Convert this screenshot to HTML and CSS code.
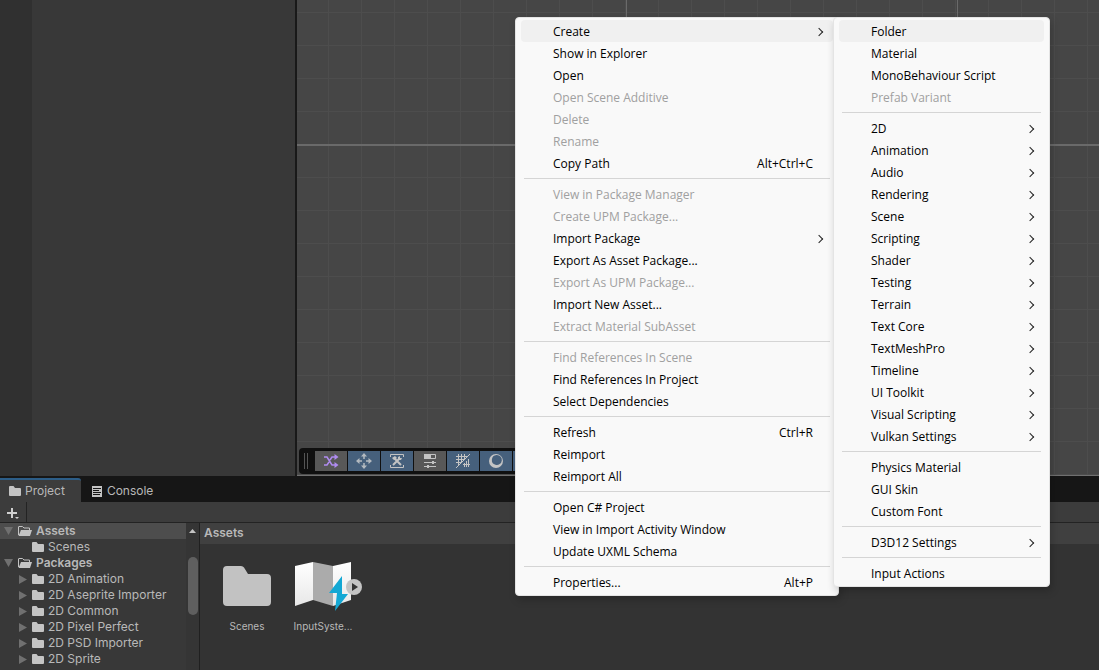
FILE: index.html
```html
<!DOCTYPE html>
<html lang="en">
<head>
<meta charset="utf-8">
<title>Project</title>
<link rel="stylesheet" href="styles.css">
</head>
<body>
<svg class="defs" aria-hidden="true">
  <symbol id="folder" viewBox="0 0 12 10"><path d="M0 1q0-1 1-1h3.500l1.500 2h5q1 0 1 1v6q0 1-1 1H1q-1 0-1-1z" fill="#c4c4c4"/></symbol>
  <symbol id="folder-open" viewBox="0 0 14 10"><path d="M.5 9V1Q.5.5 1 .5h3.500L6 2h5.500v2" fill="none" stroke="#c4c4c4"/><path d="M.5 10 3 4h11l-2 6z" fill="#c4c4c4"/></symbol>
</svg>

<main class="editor">
  <div class="hierarchy"><div class="gutter"></div></div>
  <section class="scene">
    <div class="tools" role="toolbar" aria-label="Scene tools">
      <span class="grip"></span>
      <button class="tool off" aria-label="Shuffle"><svg width="16" height="14" viewBox="0 0 16 14"><path d="M1 3h3l5 8h4M1 11h3l2-3M7 6l2-3h4" fill="none" stroke="#b08cf0" stroke-width="1.500"/><path d="M11.500 0v6l4-3zM11.500 8v6l4-3z" fill="#b08cf0"/></svg></button>
      <button class="tool" aria-label="Move"><svg width="16" height="16" viewBox="0 0 16 16"><path d="M8 2v4M8 10v4M2 8h4M10 8h4" fill="none" stroke="#b4bac0" stroke-width="1.500"/><path d="M8 0l3 3.500H5zM8 16l3-3.500H5zM0 8l3.500-3v6zM16 8l-3.500-3v6z" fill="#b4bac0"/></svg></button>
      <button class="tool" aria-label="Tools"><svg width="16" height="16" viewBox="0 0 16 16"><path d="M1.500 4V1.500h13V4M1.500 12v2.500h13V12" fill="none" stroke="#c4c4c4"/><path d="m5 5 7 7M10.500 5.500 4 12" fill="none" stroke="#c4c4c4" stroke-width="2"/><path d="M3 5l3-2 2 2-3 2zM9 4l2-1v2l2 0-1 2-3 0z" fill="#c4c4c4"/></svg></button>
      <button class="tool off" aria-label="Overlays"><svg width="14" height="14" viewBox="0 0 14 14"><path d="M1.500 .5h11v4h-11z" fill="none" stroke="#c4c4c4"/><path d="M1 0h7v5H1z" fill="#c4c4c4"/><path d="M1 8.500h12M1 12.500h12" stroke="#c4c4c4"/><path d="M9 7h2v3H9zM4 11h2v3H4z" fill="#c4c4c4"/></svg></button>
      <button class="tool" aria-label="Grid snapping"><svg width="16" height="16" viewBox="0 0 16 16"><path d="M1 3.500h11M1 6.500h8M1 9.500h5M3.500 1v11M6.500 1v8M9.500 1v5M8 11.500h7M9.500 10v4M11.500 8v6M13.500 6v8M1 15 15 1" fill="none" stroke="#c4c4c4"/></svg></button>
      <button class="tool" aria-label="Draw mode"><svg width="16" height="16" viewBox="0 0 16 16"><path d="M8 1a7 7 0 1 0 0 14A7 7 0 0 0 8 1zM8.500 2a5 5 0 1 1-1 9.800A5 5 0 0 1 8.500 2z" fill="#c4c4c4" fill-rule="evenodd"/></svg></button>
      <button class="tool" aria-label="View options"></button>
    </div>
  </section>
</main>

<section class="dock">
  <div class="tabs" role="tablist">
    <button class="tab active" role="tab" aria-selected="true"><svg width="12" height="10"><use href="#folder"/></svg>Project</button>
    <button class="tab" role="tab" aria-selected="false"><svg width="10" height="11" viewBox="0 0 10 11"><path d="M0 0h10v11H0z" fill="#c4c4c4"/><path d="M1 2.500h8M1 4.500h6M1 6.500h8M1 8.500h7" stroke="#161616"/></svg>Console</button>
  </div>
  <div class="bar">
    <button class="add" aria-label="Add"><svg width="12" height="11" viewBox="0 0 12 11"><path d="M5 0v10M0 5h10" stroke="#d0d0d0" stroke-width="2"/><path d="M8 9h4l-2 2z" fill="#d0d0d0"/></svg></button>
  </div>
  <div class="browser">
    <ul class="tree">
      <li class="node selected"><svg class="arrow" width="9" height="8" viewBox="0 0 9 8"><path d="M0 0h9L4.500 8z"/></svg><svg width="14" height="10"><use href="#folder-open"/></svg><b>Assets</b></li>
      <li class="node deep"><span class="arrow blank"></span><svg width="12" height="10"><use href="#folder"/></svg>Scenes</li>
      <li class="node"><svg class="arrow" width="9" height="8" viewBox="0 0 9 8"><path d="M0 0h9L4.500 8z"/></svg><svg width="14" height="10"><use href="#folder-open"/></svg><b>Packages</b></li>
      <li class="node deep"><svg class="arrow" width="8" height="9" viewBox="0 0 8 9"><path d="M0 0v9l8-4.500z"/></svg><svg width="12" height="10"><use href="#folder"/></svg>2D Animation</li>
      <li class="node deep"><svg class="arrow" width="8" height="9" viewBox="0 0 8 9"><path d="M0 0v9l8-4.500z"/></svg><svg width="12" height="10"><use href="#folder"/></svg>2D Aseprite Importer</li>
      <li class="node deep"><svg class="arrow" width="8" height="9" viewBox="0 0 8 9"><path d="M0 0v9l8-4.500z"/></svg><svg width="12" height="10"><use href="#folder"/></svg>2D Common</li>
      <li class="node deep"><svg class="arrow" width="8" height="9" viewBox="0 0 8 9"><path d="M0 0v9l8-4.500z"/></svg><svg width="12" height="10"><use href="#folder"/></svg>2D Pixel Perfect</li>
      <li class="node deep"><svg class="arrow" width="8" height="9" viewBox="0 0 8 9"><path d="M0 0v9l8-4.500z"/></svg><svg width="12" height="10"><use href="#folder"/></svg>2D PSD Importer</li>
      <li class="node deep"><svg class="arrow" width="8" height="9" viewBox="0 0 8 9"><path d="M0 0v9l8-4.500z"/></svg><svg width="12" height="10"><use href="#folder"/></svg>2D Sprite</li>
    </ul>
    <div class="scroll"><svg width="7" height="4" viewBox="0 0 7 4"><path d="M0 4h7L3.500 0z" fill="#c4c4c4"/></svg><span class="thumb"></span></div>
    <div class="content">
      <h2 class="crumb">Assets</h2>
      <div class="assets">
        <figure class="asset"><svg width="74" height="56" viewBox="0 0 74 56"><path d="M13 12q0-4 4-4h14q2 0 3 1.500l4 6.500h19q4 0 4 4v24q0 4-4 4H17q-4 0-4-4z" fill="#c2c2c2"/></svg><figcaption>Scenes</figcaption></figure>
        <figure class="asset"><svg class="preview" width="74" height="56" viewBox="0 0 74 56"><defs><linearGradient id="paper" x2="0" y2="1"><stop stop-color="#fff"/><stop offset="1" stop-color="#e8e8e8"/></linearGradient></defs><path d="M9 8l18-4v38L9 48z" fill="url(#paper)"/><path d="M27 4l20 4v40l-20-6z" fill="#ababab"/><path d="M47 8l18-4v38l-18 6z" fill="url(#paper)"/><path d="M56 18 43 35h8l-2 18 13-17h-6z" fill="#14a8d4"/><circle cx="68" cy="29" r="8" fill="#c4c4c4"/><path d="M66 25v8l6-4z" fill="#333"/></svg><figcaption>InputSyste...</figcaption></figure>
      </div>
    </div>
  </div>
</section>

<div class="menu context" role="menu">
  <button class="item open" role="menuitem">Create<i class="more"></i></button>
  <button class="item" role="menuitem">Show in Explorer</button>
  <button class="item" role="menuitem">Open</button>
  <button class="item" role="menuitem" disabled>Open Scene Additive</button>
  <button class="item" role="menuitem" disabled>Delete</button>
  <button class="item" role="menuitem" disabled>Rename</button>
  <button class="item" role="menuitem">Copy Path<kbd>Alt+Ctrl+C</kbd></button>
  <hr>
  <button class="item" role="menuitem" disabled>View in Package Manager</button>
  <button class="item" role="menuitem" disabled>Create UPM Package...</button>
  <button class="item" role="menuitem">Import Package<i class="more"></i></button>
  <button class="item" role="menuitem">Export As Asset Package...</button>
  <button class="item" role="menuitem" disabled>Export As UPM Package...</button>
  <button class="item" role="menuitem">Import New Asset...</button>
  <button class="item" role="menuitem" disabled>Extract Material SubAsset</button>
  <hr>
  <button class="item" role="menuitem" disabled>Find References In Scene</button>
  <button class="item" role="menuitem">Find References In Project</button>
  <button class="item" role="menuitem">Select Dependencies</button>
  <hr>
  <button class="item" role="menuitem">Refresh<kbd>Ctrl+R</kbd></button>
  <button class="item" role="menuitem">Reimport</button>
  <button class="item" role="menuitem">Reimport All</button>
  <hr>
  <button class="item" role="menuitem">Open C# Project</button>
  <button class="item" role="menuitem">View in Import Activity Window</button>
  <button class="item" role="menuitem">Update UXML Schema</button>
  <hr>
  <button class="item" role="menuitem">Properties...<kbd>Alt+P</kbd></button>
</div>

<div class="menu submenu" role="menu">
  <button class="item open" role="menuitem">Folder</button>
  <button class="item" role="menuitem">Material</button>
  <button class="item" role="menuitem">MonoBehaviour Script</button>
  <button class="item" role="menuitem" disabled>Prefab Variant</button>
  <hr>
  <button class="item" role="menuitem">2D<i class="more"></i></button>
  <button class="item" role="menuitem">Animation<i class="more"></i></button>
  <button class="item" role="menuitem">Audio<i class="more"></i></button>
  <button class="item" role="menuitem">Rendering<i class="more"></i></button>
  <button class="item" role="menuitem">Scene<i class="more"></i></button>
  <button class="item" role="menuitem">Scripting<i class="more"></i></button>
  <button class="item" role="menuitem">Shader<i class="more"></i></button>
  <button class="item" role="menuitem">Testing<i class="more"></i></button>
  <button class="item" role="menuitem">Terrain<i class="more"></i></button>
  <button class="item" role="menuitem">Text Core<i class="more"></i></button>
  <button class="item" role="menuitem">TextMeshPro<i class="more"></i></button>
  <button class="item" role="menuitem">Timeline<i class="more"></i></button>
  <button class="item" role="menuitem">UI Toolkit<i class="more"></i></button>
  <button class="item" role="menuitem">Visual Scripting<i class="more"></i></button>
  <button class="item" role="menuitem">Vulkan Settings<i class="more"></i></button>
  <hr>
  <button class="item" role="menuitem">Physics Material</button>
  <button class="item" role="menuitem">GUI Skin</button>
  <button class="item" role="menuitem">Custom Font</button>
  <hr>
  <button class="item" role="menuitem">D3D12 Settings<i class="more"></i></button>
  <hr>
  <button class="item" role="menuitem">Input Actions</button>
</div>
</body>
</html>
```
FILE: styles.css
```css
* { box-sizing: border-box; }
body {
  margin: 0;
  height: 100vh;
  display: flex;
  flex-direction: column;
  overflow: hidden;
  background: #383838;
  color: #b8b8b8;
  font: 12px/16px Inter, "Liberation Sans", sans-serif;
}
button { border: 0; padding: 0; margin: 0; background: none; color: inherit; font: inherit; }
svg { display: block; flex: none; }
.defs { position: absolute; width: 0; height: 0; }

.editor { flex: 1; min-height: 0; display: flex; }
.hierarchy { width: 297px; display: flex; border-right: 2px solid #191919; }
.gutter { width: 32px; background: #303030; }
.scene {
  flex: 1;
  display: flex;
  flex-direction: column;
  justify-content: flex-end;
  align-items: flex-start;
  padding: 1px 2px;
  border-bottom: 1px solid #707070;
  background:
    linear-gradient(#6a6a6a, #6a6a6a) 0 144px / 100% 2px no-repeat,
    linear-gradient(90deg, #6a6a6a 1px, transparent 1px) 329px 0 / 331px 100%,
    linear-gradient(90deg, #4d4d4d 1px, transparent 1px) 31px 0 / 33px 100%,
    linear-gradient(#4d4d4d 1px, transparent 1px) 0 12px / 100% 33px,
    #464646;
}
.tools {
  display: flex;
  align-items: center;
  gap: 1px;
  padding: 3px 3px 3px 5px;
  border-radius: 4px;
  background: #101010;
}
.grip { width: 4px; height: 16px; margin-right: 6px; border: solid #555; border-width: 0 1px; }
.tool { width: 32px; height: 20px; display: grid; place-items: center; background: #46607c; }
.tool.off { background: #585858; }

.dock { height: 194px; display: flex; flex-direction: column; }
.tabs { display: flex; align-items: flex-end; padding-top: 2px; background: #161616; }
.tab { display: flex; align-items: center; gap: 5px; height: 24px; padding: 0 11px; border-top: 2px solid transparent; }
.tab.active { padding: 0 16px 0 9px; gap: 4px; border-top-color: #2c5d87; border-radius: 0 3px 0 0; background: #3c3c3c; }
.bar { display: flex; height: 21px; border-bottom: 1px solid #232323; background: #3c3c3c; }
.add { width: 27px; display: grid; place-items: center; padding-top: 2px; border-right: 1px solid #232323; }
.browser { flex: 1; min-height: 0; display: flex; }
.tree { width: 186px; margin: 0; padding: 0; list-style: none; overflow: hidden; }
.node { display: flex; align-items: center; gap: 4px; height: 16px; padding-left: 4px; white-space: nowrap; }
.node.selected { background: #4d4d4d; }
.node.deep { padding-left: 19px; }
.node b { font-weight: 600; }
.arrow { margin-right: 1px; fill: #707070; }
.arrow.blank { width: 8px; }
.scroll { width: 14px; display: flex; flex-direction: column; align-items: center; gap: 24px; padding-top: 6px; border-right: 1px solid #202020; background: #353535; }
.thumb { width: 10px; height: 58px; border-radius: 5px; background: #5f5f5f; }
.content { flex: 1; background: #333; }
.crumb { margin: 0; height: 21px; padding: 2px 4px; background: #404040; font-size: 12px; font-weight: 600; line-height: 16px; }
.assets { display: flex; gap: 2px; padding: 14px 10px; }
.asset { width: 74px; margin: 0; text-align: center; }
.asset .preview { overflow: visible; }
.asset figcaption { padding-top: 4px; font-size: 10px; line-height: 16px; }

.menu {
  position: absolute;
  top: 17px;
  padding: 2px 5px;
  border: 1px solid #e4e4e4;
  border-radius: 4px;
  background: #f9f9f9;
  color: #000;
  font: 12px/16px "Open Sans", "Noto Sans", sans-serif;
  box-shadow: 2px 4px 8px rgba(0, 0, 0, .2);
}
.context { left: 515px; width: 324px; }
.submenu { left: 833px; width: 217px; }
.item {
  width: 100%;
  height: 22px;
  display: flex;
  align-items: center;
  padding: 1px 11px 0 32px;
  border-radius: 4px;
  text-align: left;
}
.item.open { background: #f0f0f0; }
.item:disabled { color: #a0a0a0; }
.item kbd { margin-left: auto; margin-right: 9px; font: inherit; }
.more {
  width: 6px;
  height: 6px;
  margin-left: auto;
  border: solid #222;
  border-width: 1px 1px 0 0;
  transform: rotate(45deg);
}
.menu hr { height: 1px; margin: 4px 3px; border: 0; background: #d5d5d5; }
```
